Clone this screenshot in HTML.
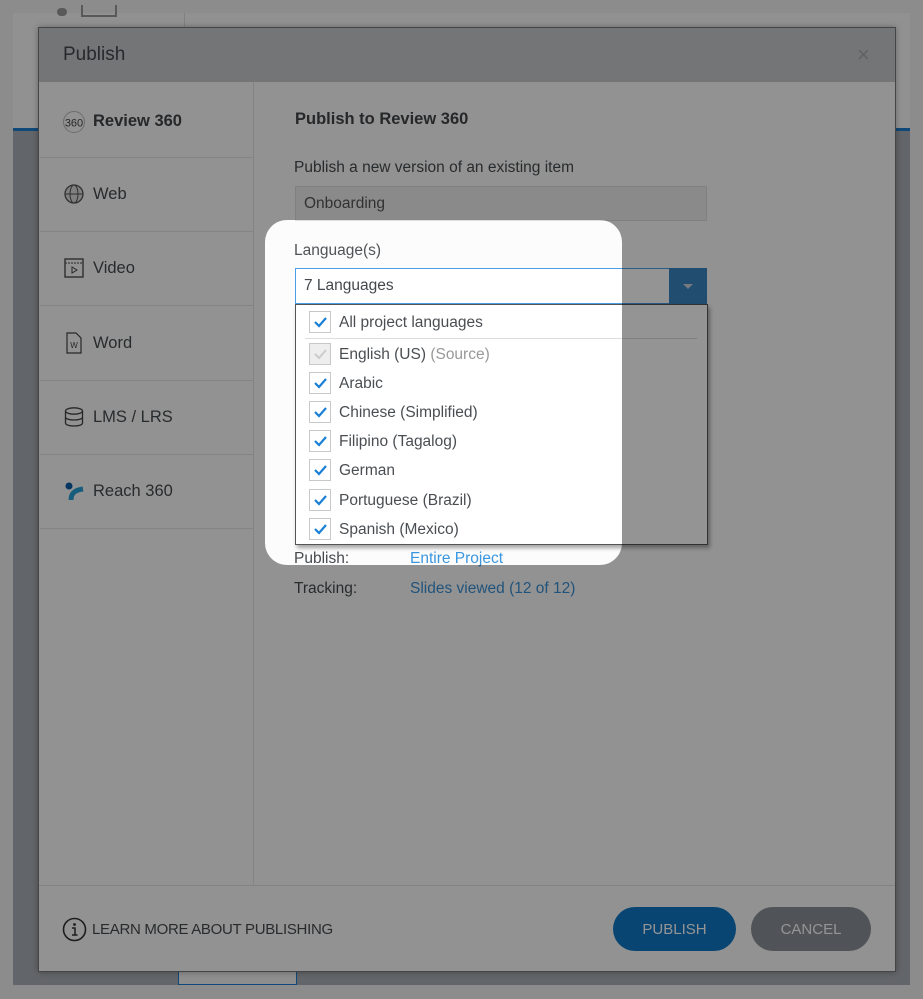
<!DOCTYPE html>
<html><head><meta charset="utf-8"><style>
*{margin:0;padding:0;box-sizing:border-box}
body{width:923px;height:999px;overflow:hidden;position:relative;background:#f2f2f2;font-family:"Liberation Sans","DejaVu Sans",sans-serif;color:#464a4e}
.a{position:absolute}
.t{position:absolute;white-space:nowrap;line-height:1}
.sep{position:absolute;left:40px;width:213px;height:1px;background:#e4e4e4}
.cb{position:absolute;left:309px;width:22px;height:22px;border:1px solid #c8c8c8;background:#fff}
.cb svg{position:absolute;left:3px;top:3px}
.li{position:absolute;left:339px;font-size:15.5px;color:#4a4e52;white-space:nowrap;line-height:1}
</style></head><body>
<div class="a" style="left:13px;top:13px;width:897px;height:115px;background:#fafafa"></div>
<div class="a" style="left:13px;top:128px;width:897px;height:3px;background:#1d7fd0"></div>
<div class="a" style="left:13px;top:131px;width:897px;height:854px;background:#a9aeb5"></div>
<div class="a" style="left:178px;top:972px;width:119px;height:13px;background:#f4f4f4;border:1px solid #1d7fd0;border-top:none"></div>
<div class="a" style="left:57px;top:8px;width:10px;height:8px;border-radius:5px;background:#999"></div>
<div class="a" style="left:81px;top:5px;width:36px;height:12px;border:2px solid #999;border-top:none"></div>
<div class="a" style="left:184px;top:13px;width:1px;height:62px;background:#ddd"></div>
<div class="a" style="left:38px;top:27px;width:858px;height:945px;background:#fcfcfc;border:1px solid #777;box-shadow:0 0 6px rgba(0,0,0,.3)"></div>
<div class="a" style="left:38px;top:27px;width:858px;height:55px;background:#c6cacb;border:1px solid #777;border-bottom:none"></div>
<div class="t" style="left:63px;top:45px;font-size:19px;color:#44484c">Publish</div>
<div class="t" style="left:857px;top:44px;font-size:22px;color:#aaa">×</div>
<div class="a" style="left:253px;top:82px;width:1px;height:803px;background:#e4e4e4"></div>
<div class="sep" style="top:157px"></div><div class="sep" style="top:231px"></div><div class="sep" style="top:305px"></div><div class="sep" style="top:380px"></div><div class="sep" style="top:454px"></div><div class="sep" style="top:528px"></div>
<svg class="a" style="left:62px;top:110px" width="24" height="24"><circle cx="12" cy="12" r="10.5" fill="none" stroke="#bbb" stroke-width="1"/><text x="12" y="16.5" font-size="11" text-anchor="middle" fill="#444" font-family="Liberation Sans">360</text></svg>
<div class="t" style="left:93px;top:113px;font-size:16.5px;font-weight:bold;color:#404448">Review 360</div>
<svg class="a" style="left:64px;top:184px" width="20" height="20"><circle cx="10" cy="10" r="9" fill="#ddd" stroke="#555" stroke-width="1.3"/><ellipse cx="10" cy="10" rx="4" ry="9" fill="none" stroke="#555"/><line x1="1" y1="10" x2="19" y2="10" stroke="#555"/></svg>
<div class="t" style="left:93px;top:186px;font-size:16.5px">Web</div>
<svg class="a" style="left:64px;top:258px" width="20" height="20"><rect x="1" y="1" width="18" height="18" fill="none" stroke="#444" stroke-width="1.3"/><line x1="1" y1="5" x2="19" y2="5" stroke="#444" stroke-dasharray="2 1"/><path d="M8 9 L13 12 L8 15Z" fill="none" stroke="#444"/></svg>
<div class="t" style="left:93px;top:260px;font-size:16.5px">Video</div>
<svg class="a" style="left:66px;top:332px" width="16" height="22"><path d="M1 1 H10 L15 6 V21 H1Z" fill="none" stroke="#444" stroke-width="1.2"/><text x="8" y="16" font-size="8" text-anchor="middle" fill="#444">W</text></svg>
<div class="t" style="left:93px;top:335px;font-size:16.5px">Word</div>
<svg class="a" style="left:64px;top:407px" width="20" height="22"><ellipse cx="10" cy="4" rx="8.5" ry="3.2" fill="none" stroke="#444" stroke-width="1.3"/><path d="M1.5 4 V16 C1.5 20 18.5 20 18.5 16 V4 M1.5 10 C1.5 14 18.5 14 18.5 10" fill="none" stroke="#444" stroke-width="1.3"/></svg>
<div class="t" style="left:93px;top:409px;font-size:16.5px">LMS / LRS</div>
<svg class="a" style="left:64px;top:481px" width="22" height="20"><circle cx="5" cy="5" r="3.5" fill="#0a5ca8"/><path d="M7 19 C7 12 11 9 19 8" fill="none" stroke="#2a9fd6" stroke-width="5"/></svg>
<div class="t" style="left:93px;top:483px;font-size:16.5px">Reach 360</div>
<div class="t" style="left:295px;top:111px;font-size:16.5px;font-weight:bold;color:#404448">Publish to Review 360</div>
<div class="t" style="left:294px;top:160px;font-size:15.5px">Publish a new version of an existing item</div>
<div class="a" style="left:295px;top:186px;width:412px;height:35px;background:#eeeeee;border:1px solid #ddd"></div>
<div class="t" style="left:304px;top:196px;font-size:15.5px;color:#555">Onboarding</div>
<div class="t" style="left:294px;top:243px;font-size:15.5px;color:#505458">Language(s)</div>
<div class="a" style="left:295px;top:268px;width:412px;height:36px;background:#fff;border:1px solid #4aa0e8"></div>
<div class="a" style="left:669px;top:268px;width:38px;height:36px;background:#3a85c2"></div>
<div class="a" style="left:683px;top:284px;width:0;height:0;border-left:5px solid transparent;border-right:5px solid transparent;border-top:5px solid #c8d0d8"></div>
<div class="t" style="left:304px;top:278px;font-size:15.5px;color:#44484c">7 Languages</div>
<div class="t" style="left:294px;top:551px;font-size:15.5px">Publish:</div>
<div class="t" style="left:410px;top:551px;font-size:15.5px;color:#3b97e0">Entire Project</div>
<div class="t" style="left:294px;top:581px;font-size:15.5px">Tracking:</div>
<div class="t" style="left:410px;top:581px;font-size:15.5px;color:#3b8fd4">Slides viewed (12 of 12)</div>
<div class="a" style="left:295px;top:304px;width:413px;height:241px;background:#fff;border:1px solid #555;box-shadow:2px 3px 4px rgba(0,0,0,.35)"></div>
<div class="a" style="left:305px;top:338px;width:392px;height:1px;background:#ddd"></div>
<div class="cb" style="top:311px"><svg width="14" height="14"><path d="M2 7 L6 11 L13 3" fill="none" stroke="#1a7fd6" stroke-width="2.2"/></svg></div>
<div class="li" style="top:315px">All project languages</div>
<div class="cb" style="top:343px;background:#eee"><svg width="14" height="14"><path d="M2 7 L6 11 L13 3" fill="none" stroke="#ccc" stroke-width="2"/></svg></div>
<div class="li" style="top:347px">English (US) <span style="color:#999">(Source)</span></div>
<div class="cb" style="top:372px"><svg width="14" height="14"><path d="M2 7 L6 11 L13 3" fill="none" stroke="#1a7fd6" stroke-width="2.2"/></svg></div>
<div class="li" style="top:376px">Arabic</div>
<div class="cb" style="top:401px"><svg width="14" height="14"><path d="M2 7 L6 11 L13 3" fill="none" stroke="#1a7fd6" stroke-width="2.2"/></svg></div>
<div class="li" style="top:405px">Chinese (Simplified)</div>
<div class="cb" style="top:430px"><svg width="14" height="14"><path d="M2 7 L6 11 L13 3" fill="none" stroke="#1a7fd6" stroke-width="2.2"/></svg></div>
<div class="li" style="top:434px">Filipino (Tagalog)</div>
<div class="cb" style="top:459px"><svg width="14" height="14"><path d="M2 7 L6 11 L13 3" fill="none" stroke="#1a7fd6" stroke-width="2.2"/></svg></div>
<div class="li" style="top:463px">German</div>
<div class="cb" style="top:489px"><svg width="14" height="14"><path d="M2 7 L6 11 L13 3" fill="none" stroke="#1a7fd6" stroke-width="2.2"/></svg></div>
<div class="li" style="top:493px">Portuguese (Brazil)</div>
<div class="cb" style="top:518px"><svg width="14" height="14"><path d="M2 7 L6 11 L13 3" fill="none" stroke="#1a7fd6" stroke-width="2.2"/></svg></div>
<div class="li" style="top:522px">Spanish (Mexico)</div>
<div class="a" style="left:39px;top:885px;width:856px;height:1px;background:#e0e0e0"></div>
<svg class="a" style="left:62px;top:917px" width="25" height="25"><circle cx="12.5" cy="12.5" r="11" fill="none" stroke="#333" stroke-width="1.6"/><circle cx="12.5" cy="7.5" r="1.4" fill="#333"/><path d="M10 11 H13 V18 M10 18 H15.5" fill="none" stroke="#333" stroke-width="1.5"/></svg>
<div class="t" style="left:92px;top:922px;font-size:15px;color:#464a4f;letter-spacing:-0.3px">LEARN MORE ABOUT PUBLISHING</div>
<div class="a" style="left:613px;top:907px;width:123px;height:44px;border-radius:22px;background:#0f78c4"></div>
<div class="t" style="left:613px;width:123px;text-align:center;top:922px;font-size:15px;color:#fff">PUBLISH</div>
<div class="a" style="left:751px;top:907px;width:120px;height:44px;border-radius:22px;background:#8a9098"></div>
<div class="t" style="left:751px;width:120px;text-align:center;top:922px;font-size:15px;color:#fff">CANCEL</div>
<div class="a" style="left:265px;top:220px;width:357px;height:345px;border-radius:22px;box-shadow:0 0 0 2000px rgba(0,0,0,0.42);z-index:10"></div>
</body></html>
